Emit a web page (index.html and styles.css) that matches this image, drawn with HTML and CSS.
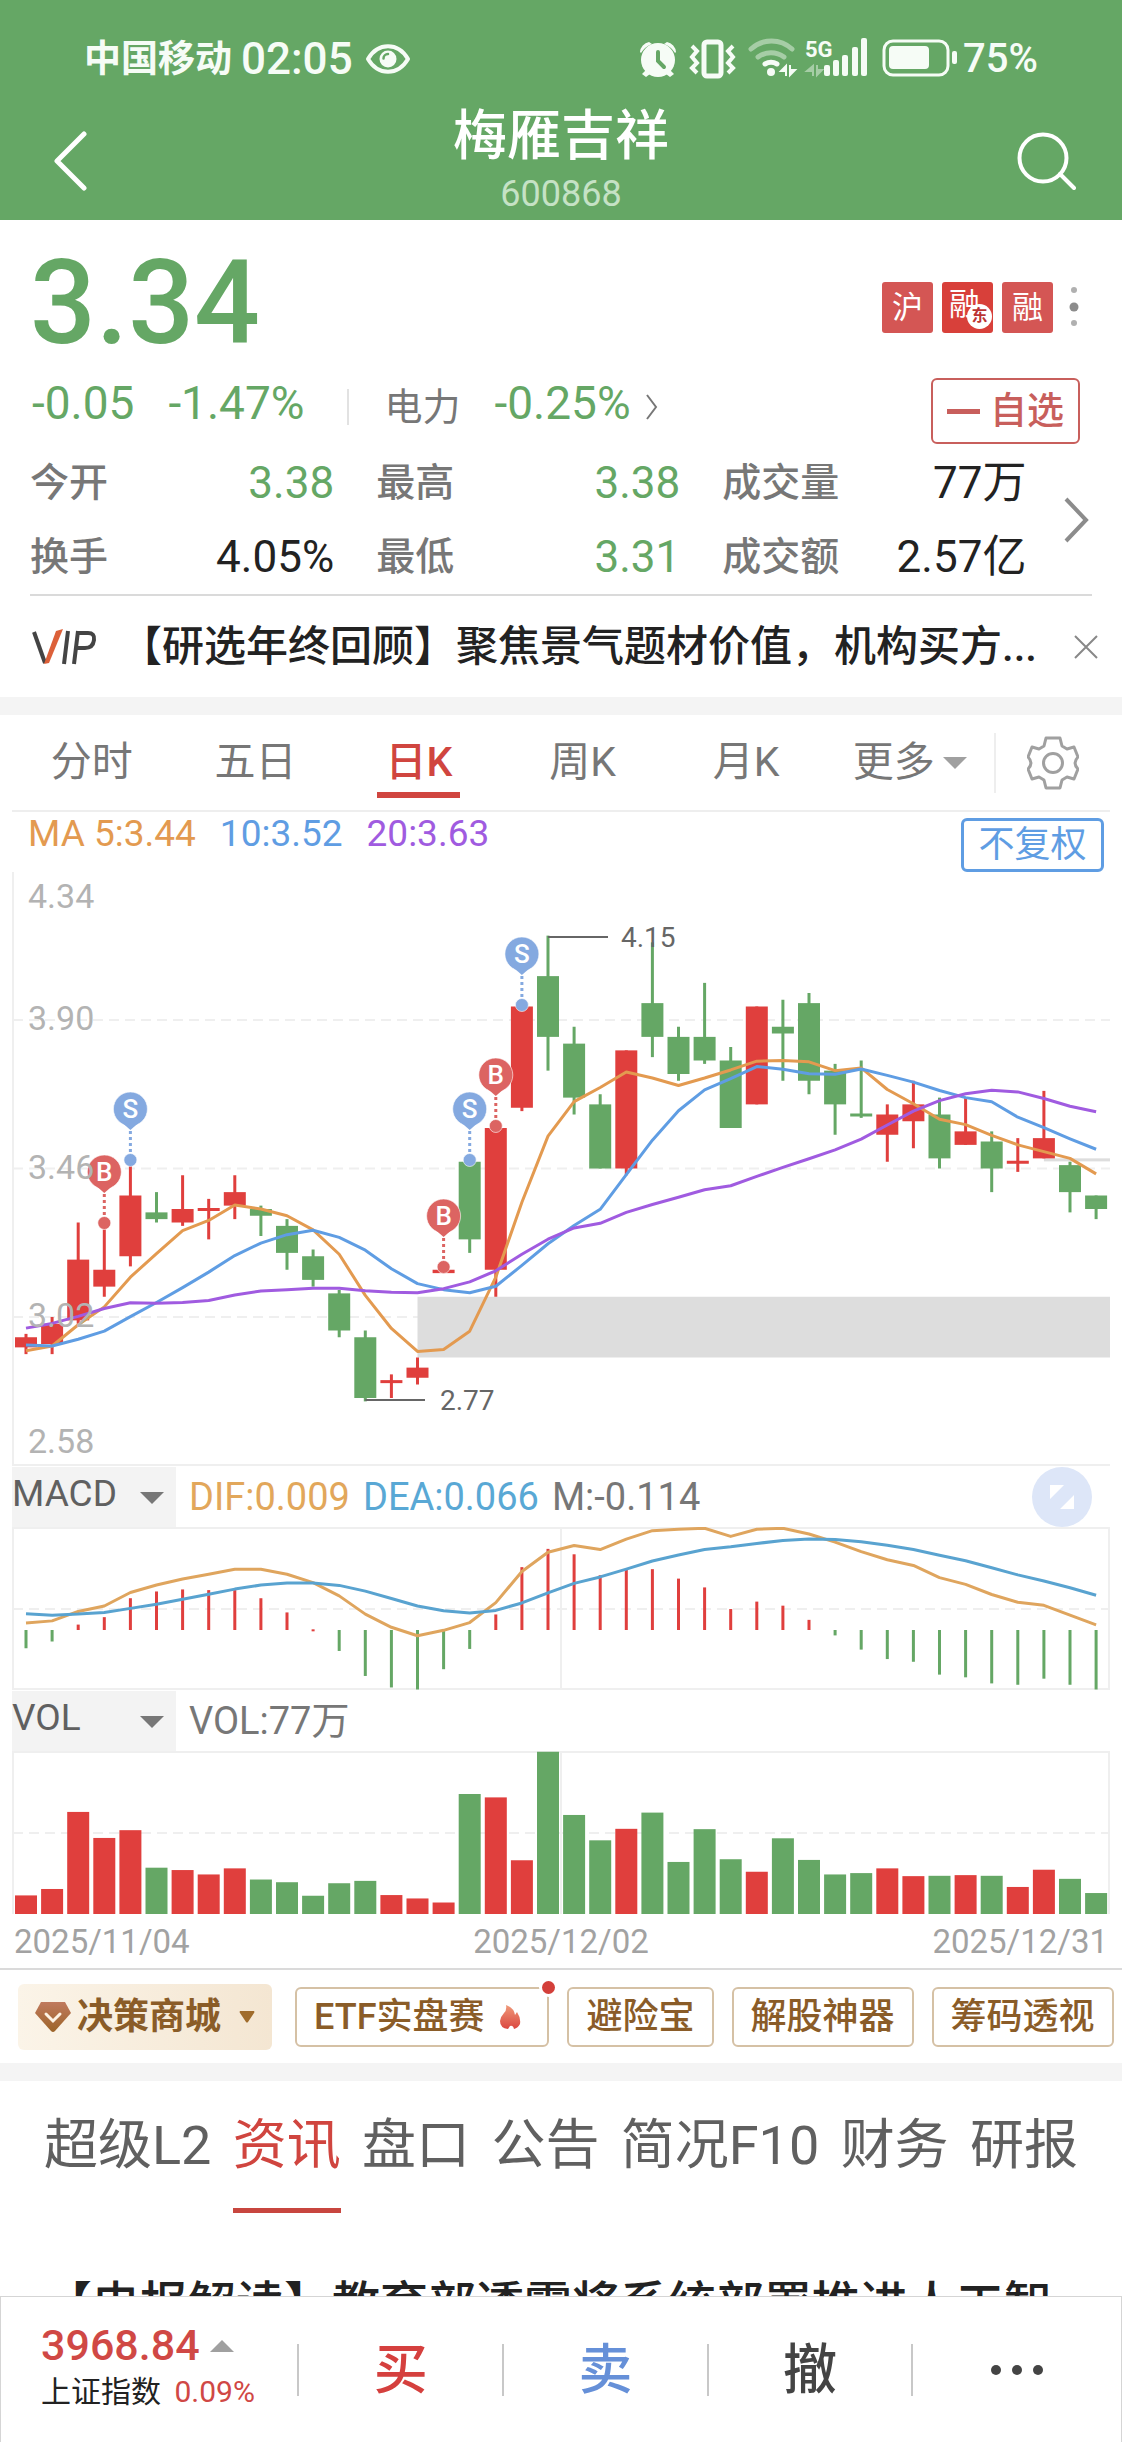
FILE: index.html
```html
<!DOCTYPE html>
<html lang="zh-CN">
<head>
<meta charset="utf-8">
<meta name="viewport" content="width=device-width, initial-scale=1">
<title>梅雁吉祥 600868</title>
<link rel="stylesheet" href="styles.css">
</head>
<body>
<div class="app">
  <header class="header">
    <div class="status">
      <span class="carrier">中国移动</span>
      <span class="clock">02:05</span>
      <svg class="eye" width="46" height="32" viewBox="0 0 46 32" aria-hidden="true">
        <path d="M3 16C13-1 33-1 43 16C33 33 13 33 3 16Z" fill="none" stroke="#f6fcf6" stroke-width="4" stroke-linejoin="round"/>
        <circle cx="23" cy="16" r="8.5" fill="#f6fcf6"/>
        <path d="M18.5 15.500a4.500 4.500 0 0 1 4.500-4.500" fill="none" stroke="#65a765" stroke-width="2.500" stroke-linecap="round"/>
      </svg>
      <svg class="status-icons" width="320" height="44" viewBox="638 37 320 44" aria-hidden="true">
        <g fill="#f6fcf6" stroke="none">
          <circle cx="658" cy="60" r="17"/>
          <path d="M640 52a11 11 0 0 1 9-10l3 2a22 22 0 0 0-11 9zM676 52a11 11 0 0 0-9-10l-3 2a22 22 0 0 1 11 9z"/>
          <path d="M646 70l4 4-4 3-4-3zM670 70l-4 4 4 3 4-3z"/>
        </g>
        <path d="M658 52v9l6 6" fill="none" stroke="#65a765" stroke-width="4" stroke-linecap="round"/>
        <rect x="704" y="42" width="17" height="34" rx="3" fill="none" stroke="#f6fcf6" stroke-width="5"/>
        <path d="M692 46l5 5-5 6 5 6-5 5 5 5M733 46l-5 5 5 6-5 6 5 5-5 5" fill="none" stroke="#f6fcf6" stroke-width="4"/>
        <g fill="none" stroke-linecap="round" stroke-width="5">
          <path d="M751 49a30 30 0 0 1 41 0M758 57a22 22 0 0 1 26 0" stroke="#a6cda6"/>
          <path d="M765 64a12 12 0 0 1 12 0" stroke="#f6fcf6"/>
        </g>
        <circle cx="771" cy="72" r="4" fill="#f6fcf6"/>
        <path d="M786 76V66l-5 5h5M790 65v10l5-5h-5" stroke="#f6fcf6" stroke-width="2" fill="#f6fcf6"/>
        <text class="net" x="805" y="57">5G</text>
        <path d="M813 76V66l-6 5h6M817 65v10l5-5h-5" stroke="#a6cda6" stroke-width="2" fill="#a6cda6"/>
        <g fill="#f6fcf6">
          <rect x="824" y="65" width="6" height="11" rx="2"/><rect x="833" y="60" width="6" height="16" rx="2"/><rect x="842" y="55" width="6" height="21" rx="2"/><rect x="852" y="47" width="6" height="29" rx="2"/><rect x="861" y="38" width="6" height="38" rx="2"/>
          <rect x="889" y="46" width="40" height="23" rx="4"/><rect x="952" y="51" width="5" height="13" rx="2"/>
        </g>
        <rect x="884" y="41" width="64" height="34" rx="9" fill="none" stroke="#f6fcf6" stroke-width="3"/>
      </svg>
      <span class="battery">75%</span>
    </div>
    <div class="titlebar">
      <button class="icon-btn" aria-label="返回"><svg width="60" height="60" viewBox="-6 0 60 60"><path d="M32 3L5 30l27 27" fill="none" stroke="#fff" stroke-width="5" stroke-linecap="round" stroke-linejoin="round"/></svg></button>
      <div class="title"><h1>梅雁吉祥</h1><p>600868</p></div>
      <button class="icon-btn" aria-label="搜索"><svg width="60" height="60" viewBox="0 0 60 60"><circle cx="27" cy="27" r="23.500" fill="none" stroke="#fff" stroke-width="4"/><path d="M44 43l14 14" stroke="#fff" stroke-width="4" stroke-linecap="round"/></svg></button>
    </div>
  </header>

  <main class="content">
    <section class="quote">
      <div class="price-row">
        <strong class="price">3.34</strong>
        <div class="tags">
          <span class="tag">沪</span>
          <span class="tag tag-strong">融<i class="tag-badge">东</i></span>
          <span class="tag">融</span>
          <svg class="dots" width="10" height="42" viewBox="0 0 10 42" aria-hidden="true"><circle cx="5" cy="4" r="3" fill="#b0b0b0"/><circle cx="5" cy="21" r="4.500" fill="#8c8c8c"/><circle cx="5" cy="37" r="3" fill="#b0b0b0"/></svg>
        </div>
      </div>
      <div class="change-row">
        <span class="num down">-0.05</span>
        <span class="num down">-1.47%</span>
        <a class="sector" href="#"><span class="label">电力</span><span class="num down">-0.25%</span>
          <svg width="14" height="28" viewBox="0 0 14 28" aria-hidden="true"><path d="M2 2l9 12-9 12" fill="none" stroke="#777" stroke-width="2"/></svg></a>
        <button class="watch"><span class="minus"></span>自选</button>
      </div>
      <div class="stats-row">
        <dl class="stats">
          <div><dt>今开</dt><dd class="down">3.38</dd></div>
          <div><dt>最高</dt><dd class="down">3.38</dd></div>
          <div><dt>成交量</dt><dd>77万</dd></div>
          <div><dt>换手</dt><dd>4.05%</dd></div>
          <div><dt>最低</dt><dd class="down">3.31</dd></div>
          <div><dt>成交额</dt><dd>2.57亿</dd></div>
        </dl>
        <svg width="26" height="46" viewBox="0 0 26 46" aria-hidden="true"><path d="M2 2l20 21L2 44" fill="none" stroke="#8c8c8c" stroke-width="4"/></svg>
      </div>
      <div class="vip">
        <svg width="68" height="38" viewBox="0 0 68 38" role="img" aria-label="VIP">
          <path d="M4 4l11 31" stroke="#444" stroke-width="4"/><path d="M14 36L26 3l7-2-14 34z" fill="#dc6039"/>
          <path d="M38 3l-4 33M48 3l-4 33M48 5h10q7 0 6 7-1 8-9 8H47" fill="none" stroke="#444" stroke-width="4"/>
        </svg>
        <a href="#">【研选年终回顾】聚焦景气题材价值，机构买方...</a>
        <button class="icon-btn" aria-label="关闭"><svg width="24" height="24" viewBox="0 0 24 24"><path d="M1 1l22 22M23 1L1 23" stroke="#888" stroke-width="2"/></svg></button>
      </div>
    </section>

    <section class="chart">
      <nav class="periods">
        <a href="#">分时</a><a href="#">五日</a><a class="active" href="#">日K</a><a href="#">周K</a><a href="#">月K</a>
        <a href="#">更多<svg width="24" height="12" viewBox="0 0 24 12" aria-hidden="true"><path d="M0 0h24L12 12z" fill="#a0a0a0"/></svg></a>
        <button class="gear" aria-label="设置"><svg width="52" height="54" viewBox="0 0 52 54"><g fill="none" stroke="#a0a0a0" stroke-width="3" stroke-linejoin="round"><path d="M19 2h14l2 8 5 3 7-2 4 10q-6 6 0 12l-4 10-7-2-5 3-2 8H19l-2-8-5-3-7 2-4-10q6-6 0-12l4-10 7 2 5-3z"/><circle cx="26" cy="27" r="9.500"/></g></svg></button>
      </nav>
      <div class="ma-row">
        <span class="ma5">MA 5:3.44</span><span class="ma10">10:3.52</span><span class="ma20">20:3.63</span>
        <button class="adjust">不复权</button>
      </div>
      <svg id="kline" class="plot" viewBox="12 872 1098 594" role="img" aria-label="日K线"></svg>
      <div class="indicator">
        <label class="picker"><select aria-label="指标一"><option>MACD</option></select></label>
        <span class="dif">DIF:0.009</span><span class="dea">DEA:0.066</span><span>M:-0.114</span>
        <button class="expand" aria-label="全屏"><svg width="24" height="24" viewBox="0 0 24 24"><path d="M0 0h14L0 14zM24 24H10l14-14z" fill="#fff"/></svg></button>
      </div>
      <svg id="macd" class="plot" viewBox="12 1527 1098 163" role="img" aria-label="MACD"></svg>
      <div class="indicator">
        <label class="picker"><select aria-label="指标二"><option>VOL</option></select></label>
        <span>VOL:77万</span>
      </div>
      <svg id="vol" class="plot" viewBox="12 1751 1098 164" role="img" aria-label="成交量"></svg>
      <div class="dates"><span>2025/11/04</span><span>2025/12/02</span><span>2025/12/31</span></div>
    </section>

    <nav class="tools">
      <button class="tool tool-gold">
        <svg width="36" height="30" viewBox="0 0 36 30" aria-hidden="true"><defs><linearGradient id="gem" x1="0" y1="0" x2="0" y2="1"><stop offset="0" stop-color="#c07a5e"/><stop offset="1" stop-color="#9c6428"/></linearGradient></defs><path d="M6 0h24l6 11-16 18q-2 2-4 0L0 11z" fill="url(#gem)"/><path d="M11 12l7 7 7-7" fill="none" stroke="#fdf3e4" stroke-width="3" stroke-linecap="round"/></svg>
        决策商城
        <svg class="caret" width="16" height="12" viewBox="0 0 16 12" aria-hidden="true"><path d="M1 0h14q1 1 0 2L9 11q-1 1-2 0L1 2q-1-1 0-2z" fill="#a06c2c"/></svg>
      </button>
      <button class="tool tool-hot">ETF实盘赛
        <svg width="22" height="24" viewBox="0 0 22 24" aria-hidden="true"><defs><linearGradient id="fire" x1="0" y1="0" x2="0" y2="1"><stop offset="0" stop-color="#ef9a7a"/><stop offset="1" stop-color="#db4740"/></linearGradient></defs><path d="M7 0q8 3 9 10l2-3q4 6 3 12-2 4-6 5-1-4-4-3l-2 3Q1 23 1 16 2 11 5 8 8 5 7 0z" fill="url(#fire)"/></svg>
        <i class="dot"></i></button>
      <button class="tool">避险宝</button>
      <button class="tool">解股神器</button>
      <button class="tool">筹码透视</button>
    </nav>

    <section class="info">
      <nav class="tabs">
        <a href="#">超级L2</a><a class="active" href="#">资讯</a><a href="#">盘口</a><a href="#">公告</a><a href="#">简况F10</a><a href="#">财务</a><a href="#">研报</a>
      </nav>
      <a class="news" href="#">【电报解读】教育部透露将系统部署推进人工智</a>
    </section>
  </main>

  <footer class="bottom">
    <a class="index" href="#">
      <span class="index-value">3968.84<svg width="24" height="12" viewBox="0 0 24 12" aria-hidden="true"><path d="M0 12h24L12 0z" fill="#a0a0a0"/></svg></span>
      <span class="index-name">上证指数 <em>0.09%</em></span>
    </a>
    <button class="trade buy">买</button>
    <button class="trade sell">卖</button>
    <button class="trade">撤</button>
    <button class="trade" aria-label="更多"><svg width="54" height="12" viewBox="0 0 54 12"><g fill="#444"><circle cx="6" cy="6" r="5"/><circle cx="27" cy="6" r="5"/><circle cx="48" cy="6" r="5"/></g></svg></button>
  </footer>
</div>
<script src="charts.js"></script>
</body>
</html>
```
FILE: styles.css
```css
* { box-sizing: border-box; }
body { margin: 0; background: #fff; color: #222; font-family: Roboto, "Noto Sans CJK SC", sans-serif; line-height: 1; }
h1, p, dl, dd { margin: 0; font-weight: 500; }
a { color: inherit; text-decoration: none; }
button { margin: 0; padding: 0; border: 0; background: none; color: inherit; font: inherit; }
svg { display: block; flex: none; }
i, em { font-style: normal; }

.app { display: flex; flex-direction: column; height: 100vh; }
.content { flex: 1; min-height: 0; overflow-y: auto; scrollbar-width: none; }
.down { color: #65a765; }

/* header */
.header { height: 220px; flex: none; padding-top: 36px; background: #65a765; color: #fff; }
.status { display: flex; align-items: center; height: 46px; padding: 0 84px; color: #f6fcf6; font-weight: 700; }
.carrier { font-size: 37px; }
.clock { font-size: 44px; margin-left: 9px; font-weight: 500; }
.eye { margin-left: 12px; }
.status-icons { margin-left: auto; }
.battery { font-size: 40px; margin-left: 5px; font-weight: 500; }
.net { font-size: 22px; font-weight: 700; fill: #f6fcf6; }
.titlebar { display: grid; grid-template-columns: 60px 1fr 60px; align-items: center; padding: 28px 46px 0; }
.title { display: flex; flex-direction: column; align-items: center; gap: 12px; }
.title h1 { font-size: 54px; }
.title p { font-size: 36px; font-weight: 400; color: #c5e2c5; }

/* quote */
.quote { padding: 16px 30px 0; }
.price-row { display: flex; align-items: center; justify-content: space-between; height: 134px; padding-right: 13px; }
.price { font-size: 116px; font-weight: 500; color: #65a765; }
.tags { display: flex; align-items: center; gap: 9px; padding-top: 8px; }
.tag { position: relative; display: grid; place-items: center; width: 51px; height: 51px; border-radius: 3px; background: #d45654; color: #fff; font-size: 31px; }
.tag-strong { padding: 0 6px 6px 0; background: #d8403a; }
.tag-badge { position: absolute; right: 1px; bottom: 4px; display: grid; place-items: center; width: 25px; height: 25px; border-radius: 50%; background: #fff; color: #b33; font-size: 16px; font-weight: 700; }
.dots { margin-left: 7px; }
.change-row { display: flex; align-items: center; gap: 34px; height: 74px; padding: 0 12px 0 2px; }
.num { padding-bottom: 8px; font-size: 46px; }
.sector { display: flex; align-items: center; gap: 14px; margin-left: 8px; padding-left: 36px; border-left: 2px solid #e2e2e2; height: 36px; }
.sector .num { margin-left: 20px; }
.label { font-size: 38px; color: #777; }
.watch { display: flex; align-items: center; justify-content: center; gap: 10px; width: 149px; height: 66px; margin: 8px 0 0 auto; border: 2px solid #c85f5c; border-radius: 6px; color: #c85f5c; font-size: 37px; font-weight: 500; }
.minus { width: 33px; height: 5px; background: #c85f5c; }
.stats-row { display: flex; align-items: center; justify-content: space-between; padding-right: 2px; margin-top: 2px; }
.stats { display: grid; grid-template-columns: repeat(3, 1fr); column-gap: 42px; width: 94%; }
.stats div { display: flex; align-items: center; justify-content: space-between; height: 74px; }
.stats dt { font-size: 39px; color: #777; }
.stats dd { font-size: 44px; font-weight: 400; }
.vip { display: flex; align-items: center; height: 103px; border-top: 2px solid #dadada; font-size: 42px; font-weight: 500; }
.vip a { flex: 1; margin-left: 22px; white-space: nowrap; }
.vip .icon-btn { margin-right: -6px; }

/* chart */
.chart { padding: 0 12px; border-top: 18px solid #f4f4f4; border-bottom: 2px solid #dadada; }
.periods { display: grid; grid-template-columns: repeat(6, 163fr) 116fr; align-items: center; height: 97px; border-bottom: 2px solid #eee; color: #777; font-size: 41px; }
.periods a { position: relative; display: flex; align-items: center; justify-content: center; gap: 8px; height: 100%; padding-right: 4px; }
.periods .active { color: #d0453f; font-weight: 500; }
.periods .active::after { content: ""; position: absolute; bottom: 12px; width: 83px; height: 6px; background: #d0453f; }
.gear { display: grid; place-items: center; height: 60px; border-left: 2px solid #eee; }
.ma-row { display: flex; align-items: center; gap: 24px; height: 60px; padding: 0 6px 0 16px; font-size: 37px; }
.ma-row span { padding-bottom: 18px; }
.ma5 { color: #e39a50; }
.ma10 { color: #5f9de3; }
.ma20 { color: #a05be0; }
.adjust { width: 143px; height: 54px; margin: 6px 0 0 auto; border: 3px solid #5f9de3; border-radius: 6px; color: #5f9de3; font-size: 36px; }
.plot { width: 100%; height: auto; }
.indicator { display: flex; align-items: center; gap: 13px; height: 61px; padding-right: 18px; font-size: 38px; color: #777; }
.picker { position: relative; display: block; width: 164px; height: 60px; background: #f3f3f3; }
.picker::after { content: ""; position: absolute; right: 12px; top: 25px; border: 12px solid transparent; border-top-color: #777; border-bottom: 0; }
.picker select { width: 100%; height: 54px; padding: 0; border: 0; background: none; appearance: none; color: #606060; font: inherit; font-size: 37px; }
.dif { color: #e2a75b; }
.dea { color: #59a8d5; }
.expand { display: grid; place-items: center; width: 60px; height: 60px; margin-left: auto; border-radius: 50%; background: #dde6f8; }
.dates { display: flex; align-items: center; justify-content: space-between; height: 53px; padding: 0 2px; color: #a2a2a2; font-size: 33px; }

.grid { stroke: #efefef; stroke-width: 2; fill: none; }
.dash { stroke: #efefef; stroke-width: 2; stroke-dasharray: 10 6; }
.up-bar { fill: #e03f3d; }
.down-bar { fill: #65a765; }
.gap { fill: #ddd; }
.line { fill: none; stroke-width: 3; stroke-linejoin: round; }
.axis { fill: #b3b3b3; font-size: 34px; }
.callout { fill: #666; font-size: 28px; }
.callout-line { stroke: #666; stroke-width: 2; }
.pin { fill: #fff; font-size: 26px; font-weight: 500; text-anchor: middle; }

/* shortcut buttons */
.tools { display: flex; align-items: center; gap: 18px; height: 93px; padding: 0 8px 0 18px; font-size: 36px; color: #8a5c28; }
.tool { position: relative; display: flex; align-items: center; height: 60px; padding: 0 17px; border: 2px solid #d5c1a5; border-radius: 6px; font-weight: 500; white-space: nowrap; }
.tool-gold { height: 66px; margin-right: 5px; border: 0; background: linear-gradient(90deg, #fbf4e8, #f4e6d2); font-weight: 700; gap: 6px; }
.tool-gold .caret { margin-left: 12px; }
.tool-hot { gap: 15px; padding-right: 26px; }
.dot { position: absolute; right: -8px; top: -8px; width: 13px; height: 13px; border-radius: 50%; background: #d33f3a; box-shadow: 0 0 0 3px #fff; }

/* information tabs */
.info { padding: 0 44px; border-top: 18px solid #f4f4f4; }
.tabs { display: flex; justify-content: space-between; color: #606060; font-size: 54px; white-space: nowrap; }
.tabs a { height: 132px; padding-top: 38px; }
.tabs .active { color: #d0453f; border-bottom: 5px solid #c8463f; }
.news { display: block; padding-top: 68px; font-size: 48px; font-weight: 500; white-space: nowrap; }

/* bottom bar */
.bottom { display: grid; grid-template-columns: 297fr repeat(3, 205fr) 210fr; align-items: center; height: 146px; flex: none; border: 1px solid #d5d5d5; border-bottom: 0; background: #fff; }
.index { padding: 0 0 8px 40px; white-space: nowrap; }
.index-value { display: flex; align-items: center; gap: 10px; color: #d04845; font-size: 43px; font-weight: 500; }
.index-name { display: block; margin-top: 10px; font-size: 30px; }
.index-name em { margin-left: 6px; color: #d04845; }
.trade { display: grid; place-items: center; height: 52px; border-left: 2px solid #c8c8c8; color: #444; font-size: 54px; font-weight: 500; }
.buy { color: #d5403e; }
.sell { color: #6690d8; }
```
FILE: charts.js
```js
// One row per trading day: open, high, low, close
const days = [
  [2.93,2.97,2.91,2.96],[2.94,3.02,2.91,3.00],[3.01,3.30,3.00,3.19],[3.11,3.28,3.08,3.16],
  [3.20,3.48,3.17,3.38],[3.33,3.39,3.30,3.31],[3.30,3.44,3.29,3.34],[3.34,3.37,3.25,3.34],
  [3.35,3.44,3.31,3.39],[3.34,3.35,3.26,3.32],[3.29,3.31,3.16,3.21],[3.20,3.22,3.11,3.13],
  [3.09,3.10,2.96,2.98],[2.96,2.98,2.77,2.78],[2.83,2.85,2.78,2.83],[2.84,2.90,2.82,2.87],
  [3.15,3.16,3.15,3.16],[3.48,3.48,3.21,3.25],[3.16,3.58,3.08,3.58],[3.64,3.94,3.63,3.94],
  [4.03,4.15,3.75,3.85],[3.83,3.88,3.62,3.67],[3.65,3.68,3.46,3.46],[3.46,3.81,3.44,3.81],
  [3.95,4.13,3.79,3.85],[3.85,3.88,3.72,3.74],[3.85,4.01,3.77,3.78],[3.78,3.82,3.58,3.58],
  [3.65,3.94,3.65,3.94],[3.88,3.96,3.72,3.86],[3.95,3.98,3.68,3.72],[3.75,3.77,3.56,3.65],
  [3.62,3.78,3.61,3.62],[3.56,3.65,3.48,3.62],[3.60,3.72,3.52,3.65],[3.62,3.67,3.46,3.49],
  [3.53,3.67,3.53,3.57],[3.54,3.57,3.39,3.46],[3.48,3.55,3.45,3.48],[3.49,3.69,3.49,3.55],
  [3.47,3.48,3.33,3.39],[3.38,3.38,3.31,3.34]
];
// Averages whose window reaches back before the first day
const seeds = {
  5: [2.92,2.934,2.997,3.05],
  10: [2.937,2.934,2.954,2.978,3.021,3.063,3.107,3.153,3.202],
  20: [2.987,3.001,3.022,3.045,3.062,3.061,3.063,3.069,3.085,3.097,3.101,3.105,3.105,3.098,3.093,3.092,3.104,3.124,3.157]
};
// MACD lines, 1560 units to 1.000
const dif = [21,27,55,71,111,133,151,165,180,180,165,140,101,47,8,-17,-1,22,81,173,230,250,238,269,294,298,301,277,298,301,284,260,232,208,191,155,135,105,82,73,44,15];
const dea = [48,44,47,52,64,76,91,106,121,133,139,139,132,115,93,71,57,50,58,80,110,138,157,180,204,222,238,246,256,265,269,268,261,251,238,221,205,184,163,145,125,103];
// Volume, 480 units to the tallest bar
const volume = [55,74,302,225,248,137,130,117,135,102,94,54,91,98,56,46,34,355,345,159,480,293,218,252,300,154,251,162,125,224,160,117,121,135,112,113,115,113,80,131,104,62];

const x = i => 26 + i * 26.1;
const y = p => 1020 + (3.9 - p) * 337.5;
const rising = i => {
  const [open, , , close] = days[i];
  return close === open ? close >= days[i - 1][3] : close > open;
};
const bar = (i, w, top, bottom, up) =>
  `<rect class="${up ? 'up-bar' : 'down-bar'}" x="${x(i) - w / 2}" y="${top}" width="${w}" height="${Math.max(bottom - top, 2)}"/>`;
const line = (ys, color) =>
  `<polyline class="line" stroke="${color}" points="${ys.map((v, i) => x(i) + ',' + v).join(' ')}"/>`;
const average = n => days.map((d, i) => i < n - 1 ? seeds[n][i]
  : days.slice(i - n + 1, i + 1).reduce((sum, r) => sum + r[3], 0) / n);

function pin(i, kind, dotY) {
  const color = kind === 'B' ? '#dc6462' : '#84a9e0', cx = x(i), cy = dotY - 51;
  return `<circle cx="${cx}" cy="${cy}" r="17" fill="${color}" stroke="#fff" stroke-opacity=".6"/>
    <path d="M${cx - 8} ${cy + 14}h16l-8 7z" fill="${color}"/>
    <path d="M${cx} ${cy + 22}v24" stroke="${color}" stroke-width="3" stroke-dasharray="3 3"/>
    <circle cx="${cx}" cy="${dotY}" r="6.5" fill="${color}" stroke="#fff" stroke-opacity=".6"/>
    <text class="pin" x="${cx}" y="${cy + 9}">${kind}</text>`;
}

let k = '<path class="grid" d="M13 872V1465H1110"/>';
[3.90, 3.46, 3.02].forEach(p => { k += `<path class="dash" d="M13 ${y(p)}H1110"/>`; });
k += `<rect class="gap" x="${x(15)}" y="${y(3.08)}" width="${1110 - x(15)}" height="${y(2.90) - y(3.08)}"/>`;
k += `<rect class="gap" x="${x(39)}" y="${y(3.49)}" width="${1110 - x(39)}" height="3"/>`;
days.forEach(([o, h, l, c], i) => {
  const up = i === 32 ? false : rising(i);
  let top = y(Math.max(o, c)), bottom = y(Math.min(o, c));
  k += bar(i, 3, y(h), y(l), up);
  if (o === c) { top -= 1; bottom += 2; }
  k += bar(i, 22, top, bottom, up);
});
k += line(average(5).map(y), '#e39a50') + line(average(10).map(y), '#5f9de3') + line(average(20).map(y), '#a05be0');
k += pin(3, 'B', 1223) + pin(4, 'S', 1160) + pin(16, 'B', 1267) + pin(17, 'S', 1160) + pin(18, 'B', 1126) + pin(19, 'S', 1005);
k += `<path class="callout-line" d="M${x(20)} 937H608M${x(13)} 1400H425"/>
  <text class="callout" x="621" y="947">4.15</text><text class="callout" x="440" y="1410">2.77</text>`;
[['4.34', 908], ['3.90', 1030], ['3.46', 1179], ['3.02', 1327], ['2.58', 1453]].forEach(([t, ty]) => {
  k += `<text class="axis" x="28" y="${ty}">${t}</text>`;
});
document.getElementById('kline').innerHTML = k;

const my = v => Math.min(1630 - v * 0.338, 1690);
let m = '<path class="grid" d="M13 1528H1109V1689H13ZM561 1528V1689"/><path class="dash" d="M13 1609H1110"/>';
dif.forEach((v, i) => {
  const d = 2 * (v - dea[i]);
  m += d > 0 ? bar(i, 3, my(d), 1630, true) : bar(i, 3, 1630, my(d), false);
});
m += line(dif.map(my), '#dfa55e') + line(dea.map(my), '#59a3d0');
document.getElementById('macd').innerHTML = m;

let v = '<path class="grid" d="M13 1914V1752H1109V1914M561 1752V1914"/><path class="dash" d="M13 1833H1110"/>';
volume.forEach((n, i) => { v += bar(i, 22, 1914 - n * 0.338, 1914, i === 32 ? false : rising(i)); });
document.getElementById('vol').innerHTML = v;
```
